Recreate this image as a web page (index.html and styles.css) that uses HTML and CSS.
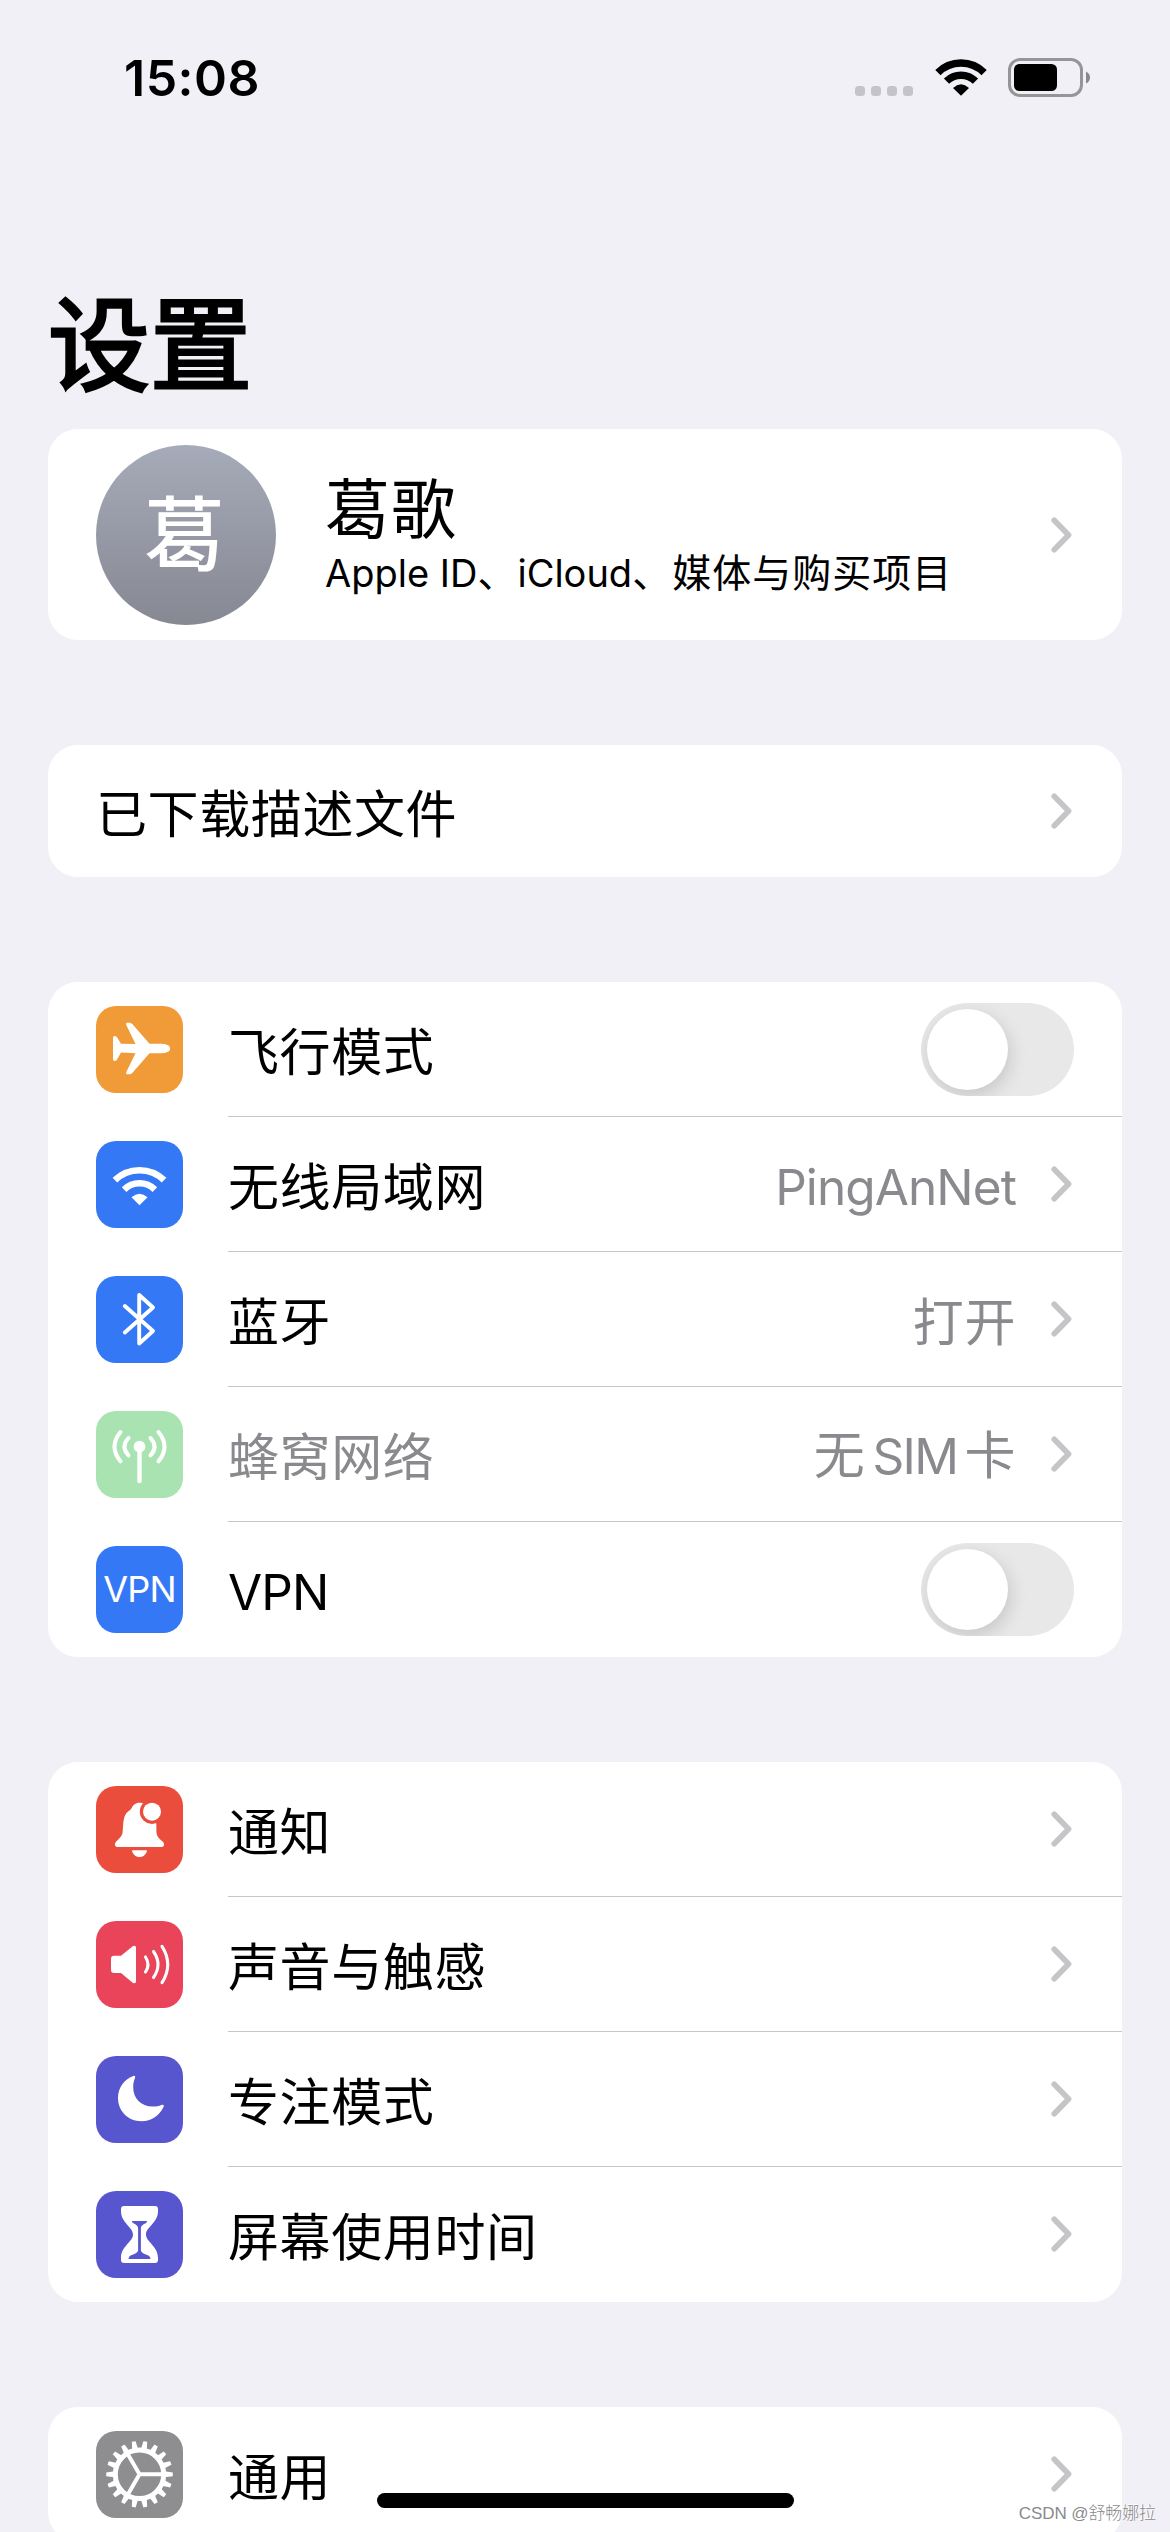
FILE: index.html
```html
<!DOCTYPE html>
<html lang="zh-CN">
<head>
<meta charset="utf-8">
<title>设置</title>
<link rel="stylesheet" href="styles.css">
</head>
<body>
<svg class="defs" width="0" height="0" aria-hidden="true">
  <symbol id="chevron" viewBox="0 0 21 36"><path d="M3.2 3.2 L17.6 18 L3.2 32.8" fill="none" stroke="#c5c5c7" stroke-width="5.6" stroke-linecap="round" stroke-linejoin="round"/></symbol>
  <path id="tooth" d="M25 -3 L33.3 -1.9 V1.9 L25 3 Z"/>
</svg>
<div class="screen">
  <header class="status">
    <span class="time">15:08</span>
    <div class="indicators">
      <div class="dots"><i></i><i></i><i></i><i></i></div>
      <svg class="wifi" width="52" height="39" viewBox="0 0 52 39">
        <g fill="none" stroke="#000" stroke-width="7.4"><path d="M2.9 14.6 A32.6 32.6 0 0 1 49.1 14.6" /><path d="M11.5 23.2 A20.5 20.5 0 0 1 40.5 23.2"/></g>
        <path d="M26 37.8 L18 29.9 Q26 22.8 34 29.9 Z"/>
      </svg>
      <svg class="battery" width="83" height="39" viewBox="0 0 83 39">
        <rect x="1.5" y="1.5" width="72" height="36" rx="10.5" fill="none" stroke="#959598" stroke-width="3"/>
        <rect x="6" y="6" width="43" height="27" rx="5.5"/>
        <path d="M78 13.5 Q82 15.500 82 19.500 T78 25.500 Z" fill="#88888b"/>
      </svg>
    </div>
  </header>
  <h1 class="title">设置</h1>
  <main class="groups">
    <section class="card profile">
      <div class="avatar">葛</div>
      <div class="who">
        <div class="name">葛歌</div>
        <div class="sub"><span class="lat">Apple ID</span>、<span class="lat">iCloud</span>、媒体与购买项目</div>
      </div>
      <svg class="chev"><use href="#chevron"/></svg>
    </section>

    <section class="card single">
      <span class="label">已下载描述文件</span>
      <svg class="chev"><use href="#chevron"/></svg>
    </section>

    <section class="card">
      <div class="row">
        <svg class="tile orange" viewBox="0 0 87 87"><path fill="#fff" d="M17 32 Q17 30 18.500 30 Q20 30 21 31.300 L25 37.800 L39.500 38 L30.300 19 Q29.400 16.700 31.700 16.700 H33.500 Q35.300 16.700 36.500 18.300 L53.500 37.800 H66 Q74.200 38.300 74.200 42.600 T66 47.300 H53.500 L36.500 66.700 Q35.300 68.300 33.500 68.300 H31.700 Q29.400 68.300 30.300 66 L39.500 47.200 L25 46.500 L21 53.500 Q20 55 18.500 55 Q17 55 17 53 Z"/></svg>
        <div class="cell"><span class="label">飞行模式</span><span class="toggle"></span></div>
      </div>
      <div class="row">
        <svg class="tile blue" viewBox="0 0 87 87"><g fill="none" stroke="#fff" stroke-width="6.600"><path d="M18.900 39.200 A35.300 35.300 0 0 1 68.100 39.200"/><path d="M28.100 48.600 A22 22 0 0 1 58.900 48.600"/></g><path fill="#fff" d="M43.500 64.300 L35.500 56.200 Q43.500 49.200 51.500 56.200 Z"/></svg>
        <div class="cell"><span class="label">无线局域网</span><span class="value lat">PingAnNet</span><svg class="chev"><use href="#chevron"/></svg></div>
      </div>
      <div class="row">
        <svg class="tile blue" viewBox="0 0 87 87"><path fill="none" stroke="#fff" stroke-width="3.900" stroke-linecap="round" stroke-linejoin="round" d="M28.800 30 L57 55 L43.200 67.500 V19 L57 31.500 L28.800 56.500"/></svg>
        <div class="cell"><span class="label">蓝牙</span><span class="value">打开</span><svg class="chev"><use href="#chevron"/></svg></div>
      </div>
      <div class="row">
        <svg class="tile mint" viewBox="0 0 87 87"><g fill="none" stroke="#fff" stroke-width="4" stroke-linecap="round"><path d="M32.500 27 Q24.500 35.500 32.500 44.500"/><path d="M54.500 27 Q62.500 35.500 54.500 44.500"/><path d="M24.500 21 Q12.500 35.700 24.500 50.300"/><path d="M62.500 21 Q74.500 35.700 62.500 50.300"/><path stroke-width="4.400" d="M43.500 36 V70"/></g><circle cx="43.500" cy="35.700" r="5.900" fill="#fff"/></svg>
        <div class="cell"><span class="label dim">蜂窝网络</span><span class="value">无<span class="lat sim">SIM</span>卡</span><svg class="chev"><use href="#chevron"/></svg></div>
      </div>
      <div class="row">
        <div class="tile blue badge">VPN</div>
        <div class="cell"><span class="label lat">VPN</span><span class="toggle"></span></div>
      </div>
    </section>

    <section class="card">
      <div class="row">
        <svg class="tile red" viewBox="0 0 87 87"><path fill="#fff" d="M21 61 Q18.500 60.500 19 57.500 C20 54.500 25.500 52 26.500 47 C27.500 40 26.500 32 30.500 27 C32 25 35 24 35.700 22 C37 19 39.500 16.700 43.500 16.700 C48 16.700 50.500 19 51.300 22 C58 25 60 31 60.300 38 C60.500 44 60 48 62 51 C64 54 67 55 68 57.500 Q68.500 60.500 66 61 Z"/><path fill="#fff" d="M36 64.200 H51 C50.500 68 47.500 71 43.500 71 S36.500 68 36 64.200 Z"/><circle class="cut" cx="56" cy="25.700" r="12.200"/><circle cx="56" cy="25.700" r="9" fill="#fff"/></svg>
        <div class="cell"><span class="label">通知</span><svg class="chev"><use href="#chevron"/></svg></div>
      </div>
      <div class="row">
        <svg class="tile pink" viewBox="0 0 87 87"><path fill="#fff" d="M18 34.700 H25 L36.700 25.300 Q40 23.500 40 27 V60 Q40 63.500 36.700 61.700 L25 52 H18 Q15 52 15 49 V37.700 Q15 34.700 18 34.700 Z"/><g fill="none" stroke="#fff" stroke-width="3.100" stroke-linecap="round"><path d="M49.500 36 Q54.500 43.500 49.500 51"/><path d="M57.500 30.500 Q66.500 43.500 57.500 56.500"/><path d="M66 25.300 Q77.500 43.500 66 61.700"/></g></svg>
        <div class="cell"><span class="label">声音与触感</span><svg class="chev"><use href="#chevron"/></svg></div>
      </div>
      <div class="row">
        <svg class="tile indigo" viewBox="0 0 87 87"><path fill="#fff" d="M37.200 20 C38.800 19.200 39.700 20.300 38.900 22.200 C37.600 25.200 37.200 28 37.200 31 C37.200 42.500 45 50.500 56.500 50.500 C60 50.500 63 50 65.500 49 C67.500 48.300 68.300 49.300 67.500 51 C63.500 59.500 55.500 65.200 45.500 65.200 C32 65.200 22 55.300 22 41.800 C22 32 28 23.500 37.200 20 Z"/></svg>
        <div class="cell"><span class="label">专注模式</span><svg class="chev"><use href="#chevron"/></svg></div>
      </div>
      <div class="row">
        <svg class="tile indigo" viewBox="0 0 87 87"><path fill="#fff" d="M28 15 H59 Q62 15 62 18 V20 C62 32 50 36 50 43.500 C50 51 62 55 62 67 V69 Q62 72 59 72 H28 Q25 72 25 69 V67 C25 55 37 51 37 43.500 C37 36 25 32 25 20 V18 Q25 15 28 15 Z"/><path class="sand" d="M36 30 H51 Q51.300 31.200 50 32 C47.500 33.500 44.900 34.500 44.900 37 V59.500 C45.500 62 49 63 52.500 64.500 Q54.500 65.700 54.500 68 H32.500 Q32.500 65.700 34.500 64.500 C38 63 41.500 62 42.100 59.500 V37 C42.100 34.500 39.500 33.500 37 32 Q35.700 31.200 36 30 Z"/></svg>
        <div class="cell"><span class="label">屏幕使用时间</span><svg class="chev"><use href="#chevron"/></svg></div>
      </div>
    </section>

    <section class="card">
      <div class="row">
        <svg class="tile gray" viewBox="0 0 87 87"><g transform="translate(43.500 43.300)" fill="#fff"><use href="#tooth"/><use href="#tooth" transform="rotate(20)"/><use href="#tooth" transform="rotate(40)"/><use href="#tooth" transform="rotate(60)"/><use href="#tooth" transform="rotate(80)"/><use href="#tooth" transform="rotate(100)"/><use href="#tooth" transform="rotate(120)"/><use href="#tooth" transform="rotate(140)"/><use href="#tooth" transform="rotate(160)"/><use href="#tooth" transform="rotate(180)"/><use href="#tooth" transform="rotate(200)"/><use href="#tooth" transform="rotate(220)"/><use href="#tooth" transform="rotate(240)"/><use href="#tooth" transform="rotate(260)"/><use href="#tooth" transform="rotate(280)"/><use href="#tooth" transform="rotate(300)"/><use href="#tooth" transform="rotate(320)"/><use href="#tooth" transform="rotate(340)"/><circle r="24.200" fill="none" stroke="#fff" stroke-width="5"/><path fill="none" stroke="#fff" stroke-width="4" d="M0 0 H23 M0 0 L-11.500 -19.900 M0 0 L-11.500 19.900"/></g></svg>
        <div class="cell"><span class="label">通用</span><svg class="chev"><use href="#chevron"/></svg></div>
      </div>
    </section>
  </main>
  <div class="home"></div>
  <div class="watermark">CSDN @舒畅娜拉</div>
</div>
</body>
</html>
```
FILE: styles.css
```css
* { box-sizing: border-box; }
body { margin: 0; }
.defs { position: absolute; }
.screen {
  position: relative;
  width: 1170px;
  height: 2532px;
  overflow: hidden;
  background: #f1f0f6;
  color: #000;
  font-family: "Noto Sans CJK SC", sans-serif;
}
.lat { font-family: Inter, "Noto Sans CJK SC", sans-serif; }

.status {
  height: 156px;
  padding: 48px 79px 0 124px;
  display: flex;
  justify-content: space-between;
  align-items: flex-start;
}
.time {
  font: 600 50px/60px Inter, sans-serif;
  letter-spacing: 0.5px;
}
.indicators { display: flex; align-items: flex-start; padding-top: 10px; }
.dots { display: flex; gap: 6px; padding-top: 28px; }
.dots i { width: 10px; height: 10px; border-radius: 3.5px; background: #c4c4c8; }
.wifi { margin-left: 22px; }
.battery { margin-left: 21px; }

.title {
  margin: 0;
  height: 273px;
  padding: 115px 0 0 48px;
  font-size: 102px;
  line-height: 136px;
  font-weight: 400;
  -webkit-text-stroke: 3px #000;
}

.groups { padding: 0 48px; display: flex; flex-direction: column; gap: 105px; }
.card { background: #fff; border-radius: 30px; }

.profile { height: 211px; padding: 0 48px; display: flex; align-items: center; }
.avatar {
  width: 180px;
  height: 180px;
  border-radius: 50%;
  background: linear-gradient(#a6abb9, #868892);
  color: #fff;
  font-size: 81px;
  font-weight: 500;
  line-height: 168px;
  text-align: center;
  text-indent: -3px;
}
.who { flex: 1; padding-left: 49px; }
.name { font-size: 65px; line-height: 74px; letter-spacing: 1px; }
.sub { font-size: 39px; line-height: 56px; letter-spacing: 1px; white-space: nowrap; }
.sub .lat { font-size: 38px; letter-spacing: 0; }

.single { height: 132px; padding: 0 48px; display: flex; align-items: center; }

.label, .value { font-size: 51px; line-height: 72px; letter-spacing: 0.6px; white-space: nowrap; }
.single .label { padding-bottom: 1px; }
.label { flex: 1; }
.value { color: #8a8a8e; margin-right: 35px; }
.label.lat, .value.lat, .sim { font-size: 49.5px; letter-spacing: -0.9px; }
.label.lat, .value.lat { padding-top: 5px; }
.sim { margin: 0 7px; letter-spacing: -1.6px; }
.dim { color: #8a8a8e; }
.chev { width: 21px; height: 36px; margin-right: 2px; flex: none; }

.row { display: flex; align-items: center; height: 135px; padding-left: 48px; }
.tile { width: 87px; height: 87px; border-radius: 20px; flex: none; margin-right: 45px; }
.cell {
  flex: 1;
  height: 135px;
  display: flex;
  align-items: center;
  padding-right: 48px;
  border-bottom: 1px solid #c6c6c8;
}
.row:last-child .cell { border-bottom-color: transparent; }

.orange { background: #f19a38; }
.blue { background: #3478f6; }
.mint { background: #a9e3b2; }
.red { background: #eb4d3d; }
.pink { background: #ea445a; }
.indigo { background: #5856cf; }
.gray { background: #8e8e91; }
.cut { fill: #eb4d3d; }
.sand { fill: #5856cf; }
.badge { color: #fff; font: 400 36px/86px Inter, sans-serif; letter-spacing: -0.8px; text-align: center; }

.toggle {
  width: 153px;
  height: 93px;
  border-radius: 47px;
  background: #e8e8e9;
  padding: 6px;
  overflow: hidden;
}
.toggle::before {
  content: "";
  display: block;
  width: 81px;
  height: 81px;
  border-radius: 50%;
  background: #fff;
  box-shadow: 2px 6px 18px rgba(0, 0, 0, 0.15);
}

.home {
  position: absolute;
  left: 377px;
  top: 2493px;
  width: 417px;
  height: 15px;
  border-radius: 8px;
  background: #000;
}
.watermark {
  position: absolute;
  right: 14px;
  top: 2501px;
  font: 300 17px/26px "Liberation Sans", "Noto Sans CJK SC", sans-serif;
  letter-spacing: -0.1px;
  color: #8a8a8c;
  text-shadow: -1px -1px 0 #fff;
  white-space: nowrap;
}
```
